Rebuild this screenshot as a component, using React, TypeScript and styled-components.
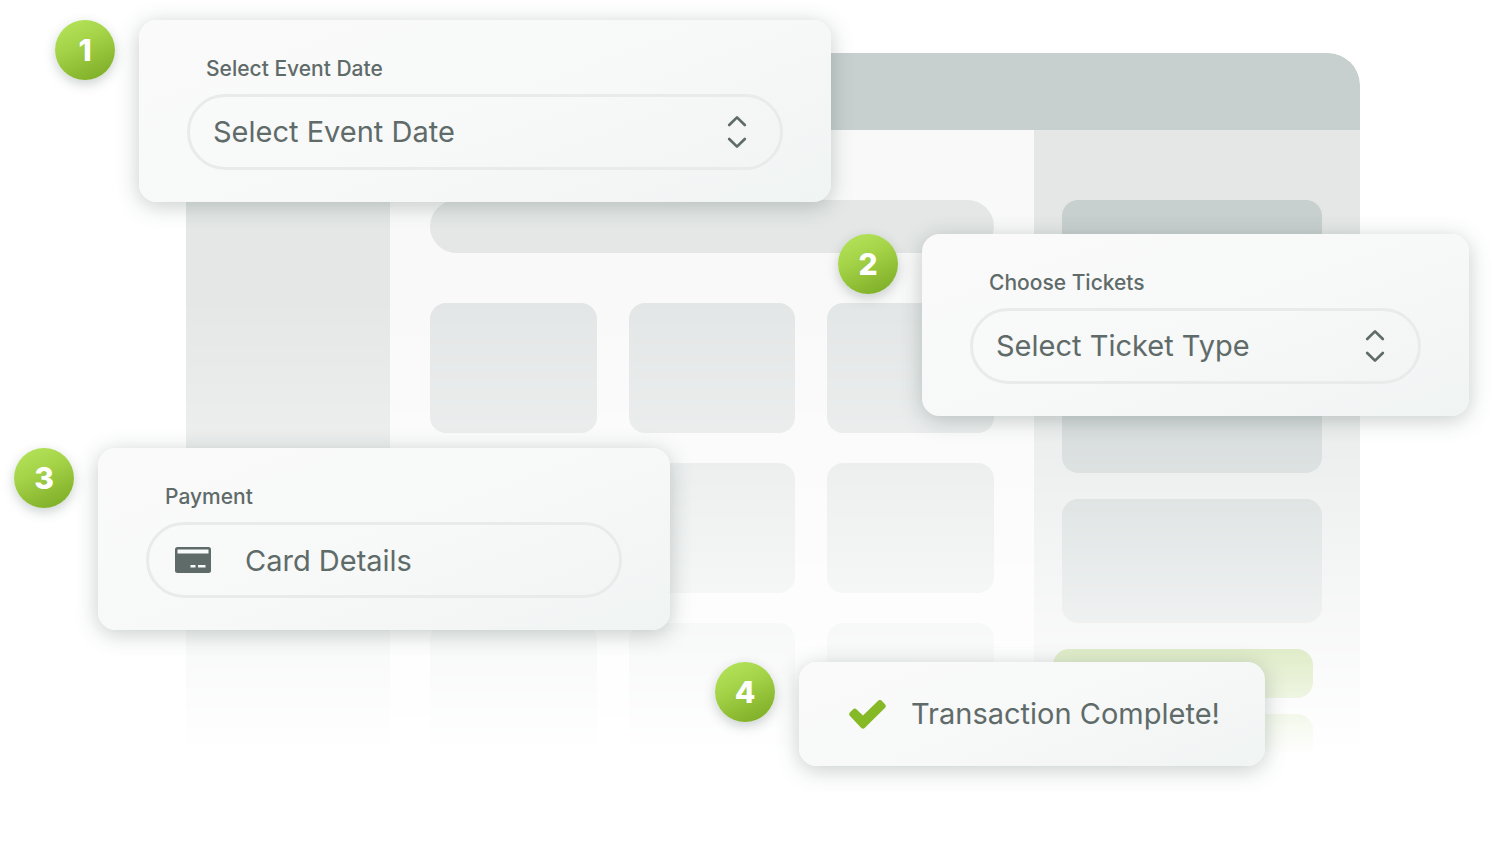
import React from "react";
import styled, { createGlobalStyle } from "styled-components";

const GlobalStyle = createGlobalStyle`
  *, *::before, *::after { box-sizing: border-box; }
  body {
    margin: 0;
    background: #ffffff;
    color: #5f6b69;
    font-family: Inter, "Liberation Sans", sans-serif;
  }
`;

/* The wireframe and the steps share one grid cell, steps on top. */
const Stage = styled.main`
  display: grid;
  grid-template-columns: minmax(0, 1fr);
  align-items: start;
  min-height: 100vh;

  > * {
    grid-area: 1 / 1;
  }
`;

const Wireframe = styled.div`
  margin: 53px 132px 0 186px;
  height: 702px;
  display: flex;
  flex-direction: column;
  overflow: hidden;
  border-radius: 32px 32px 0 0;
  mask-image: linear-gradient(to bottom, #000 35%, transparent 100%);
`;

const TitleBar = styled.div`
  flex: 0 0 77px;
  background: #c8d0cf;
`;

const Columns = styled.div`
  flex: 1;
  display: grid;
  grid-template-columns: 204px minmax(0, 1fr) 326px;
`;

const SideColumn = styled.div`
  background: #e4e7e6;
`;

const MainColumn = styled.div`
  padding: 70px 40px 0;
  background: #f9f9f9;
`;

const SearchBar = styled.div`
  height: 53px;
  border-radius: 27px;
  background: #e4e7e6;
`;

const Tiles = styled.div`
  display: grid;
  grid-template-columns: repeat(3, 1fr);
  grid-auto-rows: 130px;
  gap: 30px 32px;
  margin-top: 50px;
`;

const Tile = styled.div`
  border-radius: 16px;
  background: #e3e6e6;
`;

const SummaryColumn = styled.div`
  display: flex;
  flex-direction: column;
  padding: 70px 38px 0 28px;
  background: #e4e7e6;
`;

const SummaryPanel = styled.div<{ $height: number }>`
  flex: none;
  height: ${(p) => p.$height}px;
  margin-bottom: 26px;
  border-radius: 16px;
  background: #c8d0cf;
`;

const SummaryButtons = styled.div`
  display: grid;
  grid-auto-rows: 49px;
  gap: 16px;
  margin: 0 9px 0 -9px;
`;

const SummaryButton = styled.div`
  border-radius: 16px;
  background: #78ae14;
`;

const Steps = styled.ol`
  z-index: 1;
  display: flex;
  flex-direction: column;
  gap: 32px;
  margin: 0;
  padding: 20px 0 32px;
  list-style: none;
`;

const Step = styled.li<{ $side: "start" | "end"; $inset: number; $width: number }>`
  display: flex;
  align-items: flex-start;
  gap: 24px;
  align-self: flex-${(p) => p.$side};
  width: ${(p) => p.$width}px;
  max-width: 100%;
  margin-inline-${(p) => p.$side}: ${(p) => p.$inset}px;
`;

const Badge = styled.span`
  flex: none;
  display: grid;
  place-items: center;
  width: 60px;
  height: 60px;
  border-radius: 50%;
  background: linear-gradient(155deg, #b0df56 15%, #a4d348 40%, #7cab25 95%);
  box-shadow: 0 4px 12px rgba(50, 75, 70, 0.25);
  color: #ffffff;
  font-size: 30px;
  font-weight: 800;
  line-height: 36px;
`;

const Card = styled.div`
  flex: 1;
  min-width: 0;
  border-radius: 18px;
  background: linear-gradient(160deg, #fafafa 10%, #f7f8f8 55%, #f0f4f3 100%);
  box-shadow: 0 4px 22px rgba(50, 75, 70, 0.28);
`;

const FieldCard = styled(Card)`
  padding: 34px 48px 32px;
`;

const FieldLabel = styled.label`
  display: block;
  padding-left: 19px;
  margin-bottom: 11px;
  font-size: 21px;
  font-weight: 500;
  line-height: 29px;
`;

const Pill = styled.div`
  display: grid;
  align-items: center;
  height: 76px;
  border: 3px solid #e9ebeb;
  border-radius: 38px;

  > * {
    grid-area: 1 / 1;
  }
`;

const Select = styled.select`
  appearance: none;
  width: 100%;
  height: 100%;
  padding: 0 72px 0 23px;
  border: 0;
  border-radius: inherit;
  background: transparent;
  color: inherit;
  font: 400 29px/36px Inter, "Liberation Sans", sans-serif;
`;

const Input = styled.input`
  width: 100%;
  height: 100%;
  padding: 0 24px 0 96px;
  border: 0;
  border-radius: inherit;
  background: transparent;
  color: inherit;
  font: 400 29px/36px Inter, "Liberation Sans", sans-serif;

  &::placeholder {
    color: inherit;
    opacity: 1;
  }
`;

const ChevronsIcon = styled.svg`
  justify-self: end;
  margin-right: 33px;
  pointer-events: none;
`;

const CardIcon = styled.svg`
  margin-left: 26px;
  pointer-events: none;
`;

const DoneCard = styled(Card)`
  display: flex;
  align-items: center;
  gap: 25px;
  min-height: 104px;
  padding: 0 44px 0 50px;

  > svg {
    flex: none;
  }
`;

const DoneText = styled.p`
  margin: 0;
  font-size: 29px;
  font-weight: 400;
  line-height: 36px;
  white-space: nowrap;
`;

function Chevrons() {
  return (
    <ChevronsIcon width="20" height="34" viewBox="0 0 20 34" fill="none" stroke="#5f6b69" strokeWidth="2.7" strokeLinecap="round" strokeLinejoin="round" aria-hidden="true">
      <path d="M2.2 10 10 2.4 17.8 10" />
      <path d="M2.2 24 10 31.6 17.8 24" />
    </ChevronsIcon>
  );
}

function CreditCard() {
  return (
    <CardIcon width="36" height="26" viewBox="0 0 36 26" aria-hidden="true">
      <rect width="36" height="26" rx="2.5" fill="#5f6b69" />
      <path d="M2.5 2.4h31v4.2h-31zM15.5 18h5v2.6h-5zM23 18h7.5v2.6H23z" fill="#f9fafa" />
    </CardIcon>
  );
}

function CheckMark() {
  return (
    <svg width="37" height="29" viewBox="0 0 37 29" fill="#86b926" stroke="#86b926" strokeWidth="5.4" strokeLinejoin="round" aria-hidden="true">
      <path d="M3 14.2 5.8 11.4 14 19.2 31 2.8 34 6 14 25.8Z" />
    </svg>
  );
}

function SelectStep({ id, label, option }: { id: string; label: string; option: string }) {
  return (
    <FieldCard>
      <FieldLabel htmlFor={id}>{label}</FieldLabel>
      <Pill>
        <Select id={id}>
          <option>{option}</option>
        </Select>
        <Chevrons />
      </Pill>
    </FieldCard>
  );
}

export default function App() {
  return (
    <>
      <GlobalStyle />
      <Stage>
        <Wireframe aria-hidden="true">
          <TitleBar />
          <Columns>
            <SideColumn />
            <MainColumn>
              <SearchBar />
              <Tiles>
                {Array.from({ length: 9 }, (_, i) => (
                  <Tile key={i} />
                ))}
              </Tiles>
            </MainColumn>
            <SummaryColumn>
              <SummaryPanel $height={273} />
              <SummaryPanel $height={124} />
              <SummaryButtons>
                <SummaryButton />
                <SummaryButton />
              </SummaryButtons>
            </SummaryColumn>
          </Columns>
        </Wireframe>

        <Steps>
          <Step $side="start" $inset={55} $width={776}>
            <Badge>1</Badge>
            <SelectStep id="event-date" label="Select Event Date" option="Select Event Date" />
          </Step>
          <Step $side="end" $inset={23} $width={631}>
            <Badge>2</Badge>
            <SelectStep id="ticket-type" label="Choose Tickets" option="Select Ticket Type" />
          </Step>
          <Step $side="start" $inset={14} $width={656}>
            <Badge>3</Badge>
            <FieldCard>
              <FieldLabel htmlFor="card-details">Payment</FieldLabel>
              <Pill>
                <Input id="card-details" placeholder="Card Details" />
                <CreditCard />
              </Pill>
            </FieldCard>
          </Step>
          <Step $side="end" $inset={227} $width={550}>
            <Badge>4</Badge>
            <DoneCard>
              <CheckMark />
              <DoneText>Transaction Complete!</DoneText>
            </DoneCard>
          </Step>
        </Steps>
      </Stage>
    </>
  );
}
